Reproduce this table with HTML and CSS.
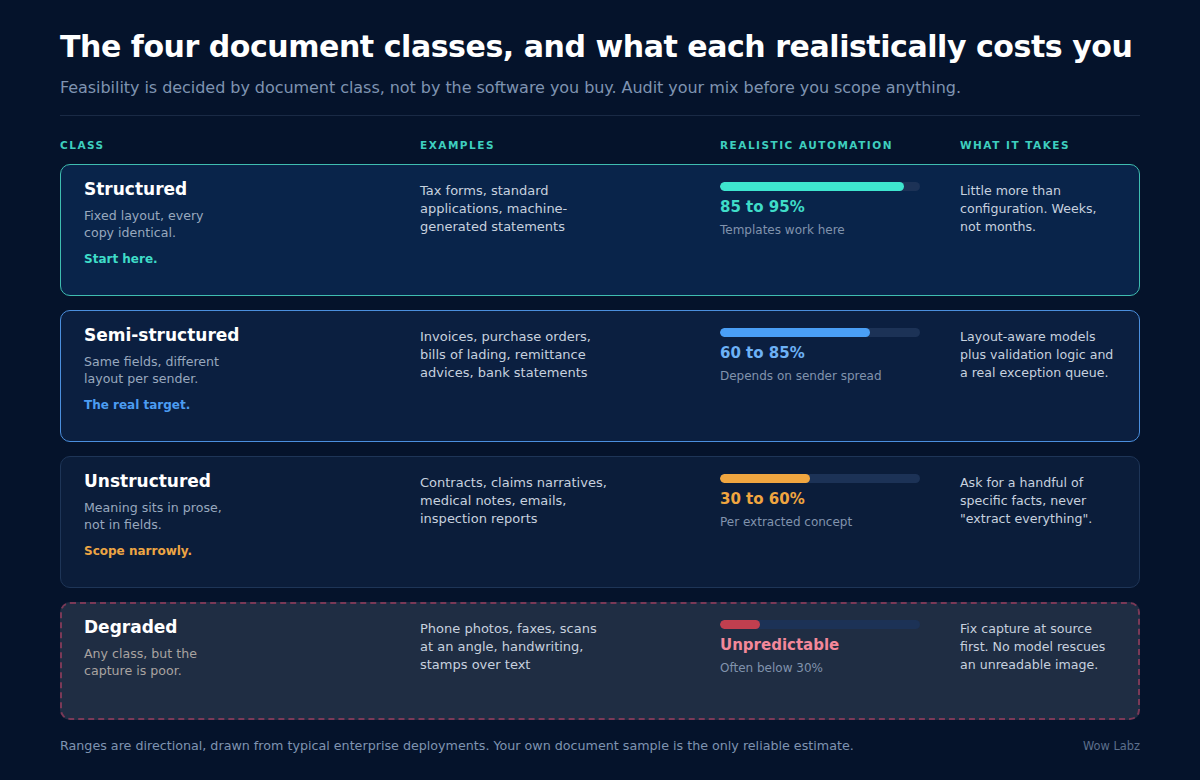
FILE: index.html
```html
<!DOCTYPE html>
<html lang="en">
<head>
<meta charset="utf-8">
<title>The four document classes</title>
<link rel="stylesheet" href="styles.css">
</head>
<body>
<main class="page">
  <header class="intro">
    <h1 class="title">The four document classes, and what each realistically costs you</h1>
    <p class="subtitle">Feasibility is decided by document class, not by the software you buy. Audit your mix before you scope anything.</p>
  </header>

  <div class="colheads">
    <div>CLASS</div>
    <div>EXAMPLES</div>
    <div>REALISTIC AUTOMATION</div>
    <div>WHAT IT TAKES</div>
  </div>

  <section class="rows">
    <article class="card card-teal">
      <div class="cls">
        <h2 class="cls-name">Structured</h2>
        <p class="cls-desc">Fixed layout, every copy identical.</p>
        <p class="cls-tag">Start here.</p>
      </div>
      <p class="examples">Tax forms, standard applications, machine-generated statements</p>
      <div class="auto">
        <div class="track"><div class="fill" style="width:92%"></div></div>
        <div class="pct">85 to 95%</div>
        <div class="note">Templates work here</div>
      </div>
      <p class="takes">Little more than configuration. Weeks, not months.</p>
    </article>

    <article class="card card-blue">
      <div class="cls">
        <h2 class="cls-name">Semi-structured</h2>
        <p class="cls-desc">Same fields, different layout per sender.</p>
        <p class="cls-tag">The real target.</p>
      </div>
      <p class="examples">Invoices, purchase orders, bills of lading, remittance advices, bank statements</p>
      <div class="auto">
        <div class="track"><div class="fill" style="width:75%"></div></div>
        <div class="pct">60 to 85%</div>
        <div class="note">Depends on sender spread</div>
      </div>
      <p class="takes">Layout-aware models plus validation logic and a real exception queue.</p>
    </article>

    <article class="card card-amber">
      <div class="cls">
        <h2 class="cls-name">Unstructured</h2>
        <p class="cls-desc">Meaning sits in prose, not in fields.</p>
        <p class="cls-tag">Scope narrowly.</p>
      </div>
      <p class="examples">Contracts, claims narratives, medical notes, emails, inspection reports</p>
      <div class="auto">
        <div class="track"><div class="fill" style="width:45%"></div></div>
        <div class="pct">30 to 60%</div>
        <div class="note">Per extracted concept</div>
      </div>
      <p class="takes">Ask for a handful of specific facts, never "extract everything".</p>
    </article>

    <article class="card card-red">
      <div class="cls">
        <h2 class="cls-name">Degraded</h2>
        <p class="cls-desc">Any class, but the capture is poor.</p>
      </div>
      <p class="examples">Phone photos, faxes, scans at an angle, handwriting, stamps over text</p>
      <div class="auto">
        <div class="track"><div class="fill" style="width:20%"></div></div>
        <div class="pct">Unpredictable</div>
        <div class="note">Often below 30%</div>
      </div>
      <p class="takes">Fix capture at source first. No model rescues an unreadable image.</p>
    </article>
  </section>

  <footer class="foot">
    <span>Ranges are directional, drawn from typical enterprise deployments. Your own document sample is the only reliable estimate.</span>
    <span class="brand">Wow Labz</span>
  </footer>
</main>
</body>
</html>
```

FILE: styles.css
```css
* { box-sizing: border-box; }

html, body {
  margin: 0;
  padding: 0;
  background: #05132b;
}

body {
  font-family: "DejaVu Sans", "Liberation Sans", sans-serif;
  color: #e6edf6;
  width: 1200px;
  height: 780px;
  overflow: hidden;
}

.page {
  padding: 29px 60px 0;
}

.intro {
  border-bottom: 1px solid #1a2a45;
  padding-bottom: 16px;
}

.title {
  margin: 0;
  font-size: 30px;
  line-height: 36px;
  font-weight: 700;
  color: #ffffff;
  letter-spacing: -0.45px;
  white-space: nowrap;
}

.subtitle {
  margin: 12px 0 0;
  font-size: 16px;
  line-height: 22px;
  color: #7f93b1;
  letter-spacing: -0.05px;
}

.colheads {
  display: grid;
  grid-template-columns: 360px 300px 240px 1fr;
  margin-top: 22px;
  font-size: 10.5px;
  line-height: 14px;
  font-weight: 700;
  letter-spacing: 1.5px;
  color: #3ecfbf;
}

.rows {
  display: flex;
  flex-direction: column;
  gap: 14px;
  margin-top: 12px;
}

.card {
  display: grid;
  grid-template-columns: 336px 300px 240px 1fr;
  align-items: start;
  padding: 17px 23px 14px;
  min-height: 132px;
  border-radius: 10px;
  border: 1px solid #1e3557;
  background: #0b1d3a;
}

.card-teal { background: #09244a; border-color: #3fbdb0; }
.card-blue { background: #0b1f40; border-color: #4b8fde; }
.card-amber { background: #0b1d3a; border-color: #1e3557; }
.card-red {
  background: #1f2d43;
  border: 2px dashed #7a3957;
  padding: 16px 22px 14px;
  min-height: 118px;
}

.cls-name {
  margin: -4px 0 0;
  font-size: 17px;
  line-height: 22px;
  font-weight: 700;
  color: #ffffff;
}

.cls-desc {
  margin: 7px 0 0;
  max-width: 146px;
  font-size: 12.6px;
  line-height: 17px;
  color: #98a8be;
}

.card-red .cls-desc { color: #a9a3a0; }

.cls-tag {
  margin: 10px 0 0;
  font-size: 12px;
  line-height: 16px;
  font-weight: 700;
}

.card-teal .cls-tag { color: #3fdcc8; }
.card-blue .cls-tag { color: #4b9cf2; }
.card-amber .cls-tag { color: #eda544; }

.examples,
.takes {
  margin: 0;
  font-size: 13px;
  line-height: 18px;
  color: #c7d1df;
}

.examples { max-width: 192px; }

.takes { font-size: 12.6px; }

.track {
  margin-top: 0;
  width: 200px;
  height: 9px;
  border-radius: 5px;
  background: #1c3256;
  overflow: hidden;
}

.fill {
  height: 100%;
  border-radius: 5px;
}

.card-teal .fill { background: #3ee6cf; }
.card-blue .fill { background: #4a9ff6; }
.card-amber .fill { background: #f0a640; }
.card-red .fill { background: #c13f4f; }

.pct {
  margin-top: 6px;
  font-size: 15px;
  line-height: 20px;
  font-weight: 700;
}

.card-teal .pct { color: #3fdcc8; }
.card-blue .pct { color: #6db1f6; }
.card-amber .pct { color: #f0a640; }
.card-red .pct { color: #f3889a; }

.note {
  margin-top: 5px;
  font-size: 12px;
  line-height: 16px;
  color: #8193ad;
}

.foot {
  display: flex;
  justify-content: space-between;
  align-items: baseline;
  margin-top: 18px;
  font-size: 12.7px;
  line-height: 16px;
  color: #7f93b1;
}

.brand {
  font-size: 11.4px;
  color: #5c6f8c;
}
```
